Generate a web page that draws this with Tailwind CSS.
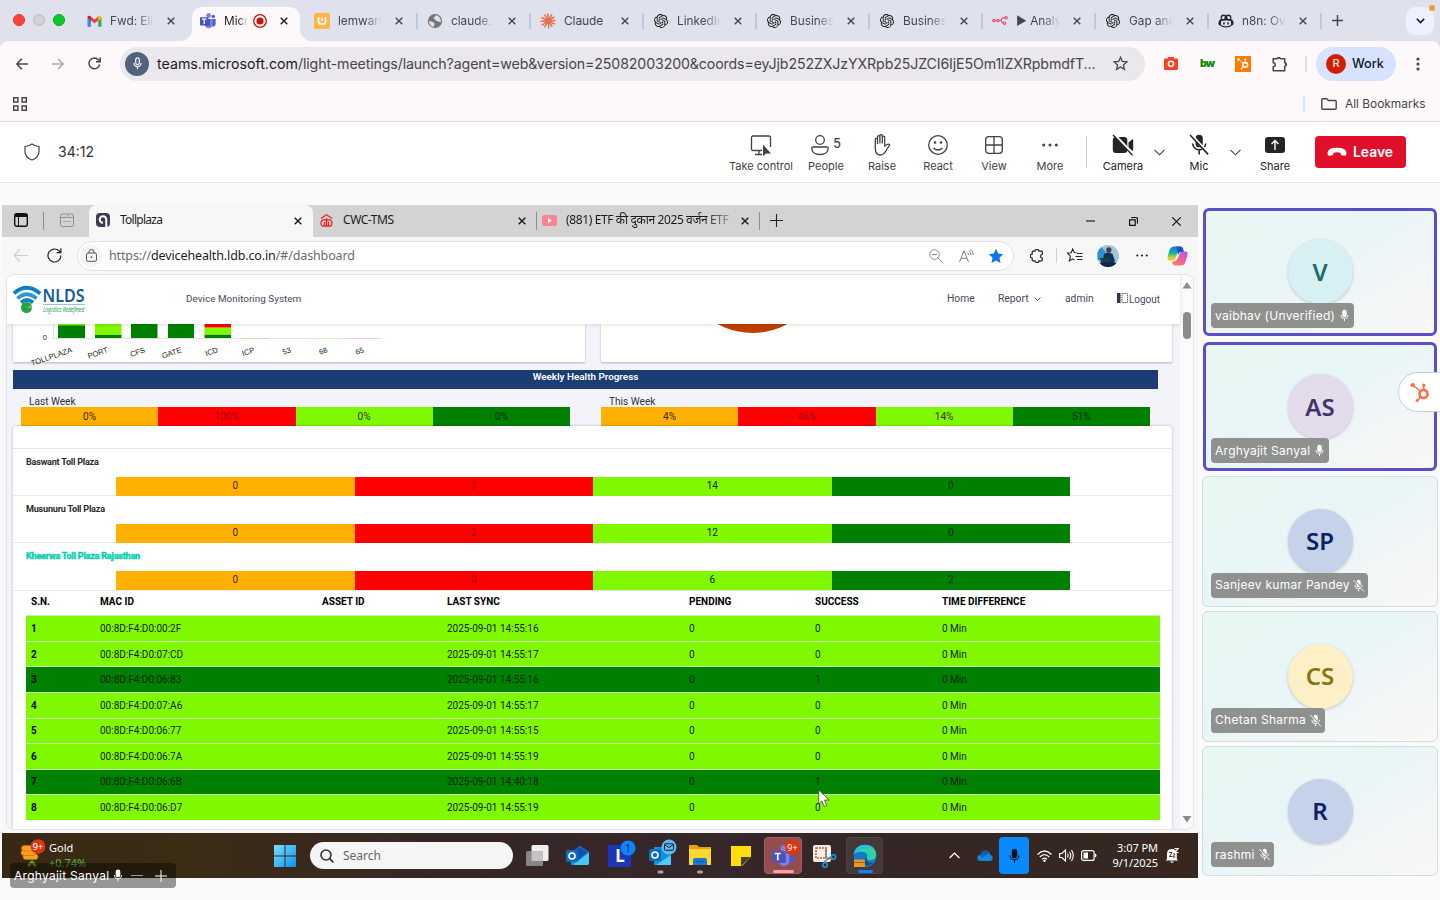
<!DOCTYPE html>
<html lang="en">
<head>
<meta charset="utf-8">
<title>Meeting</title>
<script src="https://cdn.jsdelivr.net/npm/@tailwindcss/browser@4"></script>
</head>
<body class="w-[1440px] h-[900px] overflow-hidden bg-[#fafafa] font-[Inter,'Liberation_Sans',sans-serif] relative">
<svg class="hidden">
  <symbol id="x" viewBox="0 0 8 8"><path d="M.7.7l6.6 6.6M7.3.7L.7 7.3" stroke="currentColor" stroke-width="1.4" fill="none"/></symbol>
  <symbol id="gpt" viewBox="0 0 24 24"><path fill="#16181d" d="M22.2819 9.8211a5.9847 5.9847 0 0 0-.5157-4.9108 6.0462 6.0462 0 0 0-6.5098-2.9A6.0651 6.0651 0 0 0 4.9807 4.1818a5.9847 5.9847 0 0 0-3.9977 2.9 6.0462 6.0462 0 0 0 .7427 7.0966 5.98 5.98 0 0 0 .511 4.9107 6.051 6.051 0 0 0 6.5146 2.9001A5.9847 5.9847 0 0 0 13.2599 24a6.0557 6.0557 0 0 0 5.7718-4.2058 5.9894 5.9894 0 0 0 3.9977-2.9001 6.0557 6.0557 0 0 0-.7475-7.0729zm-9.022 12.6081a4.4755 4.4755 0 0 1-2.8764-1.0408l.1419-.0804 4.7783-2.7582a.7948.7948 0 0 0 .3927-.6813v-6.7369l2.02 1.1686a.071.071 0 0 1 .038.052v5.5826a4.504 4.504 0 0 1-4.4945 4.4944zm-9.6607-4.1254a4.4708 4.4708 0 0 1-.5346-3.0137l.142.0852 4.783 2.7582a.7712.7712 0 0 0 .7806 0l5.8428-3.3685v2.3324a.0804.0804 0 0 1-.0332.0615L9.74 19.9502a4.4992 4.4992 0 0 1-6.1408-1.6464zM2.3408 7.8956a4.485 4.485 0 0 1 2.3655-1.9728V11.6a.7664.7664 0 0 0 .3879.6765l5.8144 3.3543-2.0201 1.1685a.0757.0757 0 0 1-.071 0l-4.8303-2.7865A4.504 4.504 0 0 1 2.3408 7.872zm16.5963 3.8558L13.1038 8.364 15.1192 7.2a.0757.0757 0 0 1 .071 0l4.8303 2.7913a4.4944 4.4944 0 0 1-.6765 8.1042v-5.6772a.79.79 0 0 0-.407-.667zm2.0107-3.0231l-.142-.0852-4.7735-2.7818a.7759.7759 0 0 0-.7854 0L9.409 9.2297V6.8974a.0662.0662 0 0 1 .0284-.0615l4.8303-2.7866a4.4992 4.4992 0 0 1 6.6802 4.66zM8.3065 12.863l-2.02-1.1638a.0804.0804 0 0 1-.038-.0567V6.0742a4.4992 4.4992 0 0 1 7.3757-3.4537l-.142.0805L8.704 5.459a.7948.7948 0 0 0-.3927.6813zm1.0976-2.3654l2.602-1.4998 2.6069 1.4998v2.9994l-2.5974 1.4997-2.6067-1.4997Z"/></symbol>
  <symbol id="gmail" viewBox="0 0 16 12"><path d="M1 .8V12H4V4.5z" fill="#4285f4"/><path d="M.6 2v9.3q0 .7.7.7H4V4.6z" fill="#4285f4"/><path d="M12 4.6V12h2.7q.7 0 .7-.7V2z" fill="#34a853"/><path d="M.6 2Q.6.2 2.2.3 2.8.3 3.2.6L8 4.3 12.8.6 12 5.5 8 8.5 4 5.5z" fill="#ea4335"/><path d="M.6 2Q.6.4 2 .3L4 1.5v4z" fill="#c5221f"/><path d="M12 1.2l1-.7q2.3-.8 2.4 1.6v1L12 5.6z" fill="#fbbc04"/></symbol>
  <symbol id="teams" viewBox="0 0 16 16"><circle cx="8.7" cy="2.5" r="2.4" fill="#7b83eb"/><circle cx="13.3" cy="3.4" r="1.7" fill="#5059c9"/><path d="M11 6h4.6v5a2.6 2.6 0 0 1-4.6 1.6z" fill="#5059c9"/><path d="M5 6h7.6v5.5a3.9 3.9 0 0 1-7.6 1z" fill="#7b83eb"/><path d="M5 6h5v7H5z" fill="#4f52b2"/><rect x="0" y="4.2" width="8.4" height="8.2" rx=".7" fill="#4b53bc"/><path d="M2 6.2h4.4M4.2 6.2V11" stroke="#fff" stroke-width="1.2"/></symbol>
  <symbol id="lem" viewBox="0 0 16 16"><rect width="16" height="16" rx="2" fill="#ffb648"/><path d="M4.5 4v4.5Q4.500 11 7 11h2q2.500 0 2.500-2.500V4M8 5v3" stroke="#fff" stroke-width="1.700" fill="none"/></symbol>
  <symbol id="globe" viewBox="0 0 16 16"><circle cx="8" cy="8" r="7.100" fill="#757575"/><path d="M2 8.200c2.500-.2 3 .6 4.500 1.200.6.400 1.800 1 .8 2.300L6.600 14Q2.500 13 2 8.200zM8.700 2.200c-1 1.800-1 2-2.200 2-.6 1 1.500 1.600 1 2.300 1.600.2 1.500 1.700 3 1.700 1.400.2 1.500 1 3.500.8Q14 3.200 8.700 2.200z" fill="#dfe1ec"/></symbol>
  <symbol id="claude" viewBox="0 0 16 16"><path d="M8 8V.6M8 8L11.900 1.500M8 8l6.300-4M8 8l7.500-.5M8 8l6.800 3M8 8l4.300 5.800M8 8l.8 7.400M8 8l-3.500 6.400M8 8l-6.200 4.300M8 8L.5 8.200M8 8L1.400 4.300M8 8L4.600 1.500" stroke="#e2714a" stroke-width="1.500"/></symbol>
  <symbol id="n8n" viewBox="0 0 16 9"><g fill="none" stroke="#ea4b71" stroke-width="1.200"><circle cx="1.800" cy="4.500" r="1.200"/><circle cx="6" cy="4.500" r="1.200"/><circle cx="14" cy="1.800" r="1.200"/><circle cx="12.500" cy="7.200" r="1.200"/><path d="M3 4.500h1.800M7.200 4.500h1q1.400 0 1.400-1.300T11 1.800h1.800M8.500 4.500q1.200 0 1.300 1.300T11.300 7.200"/></g></symbol>
  <symbol id="copi" viewBox="0 0 16 14"><path d="M3.300 1.200Q5 0 7 .8 8 1.300 8 1.300T9 .8Q11 0 12.700 1.200 13.800 2.400 13.200 5q1.800 1 2.300 3 .4 2-.3 2.800Q12 13.600 8 13.600T.8 10.800Q.1 10 .5 8 1 6 2.800 5 2.200 2.400 3.300 1.200z" fill="#24292f"/><path d="M4.200 2.500Q5.500 1.600 6.700 2.300 7 4.600 5.800 5 4 5.200 3.900 4.500zM11.800 2.500Q10.500 1.600 9.300 2.300 9 4.600 10.200 5q1.800.2 1.900-.5zM3 7.300Q4 6.800 8 6.600q4 .2 5 .7v3.800Q10.500 12.300 8 12.300T3 11.100z" fill="#dfe1ec"/><rect x="5.200" y="8" width="1.500" height="2.800" rx=".7" fill="#24292f"/><rect x="9.300" y="8" width="1.500" height="2.800" rx=".7" fill="#24292f"/></symbol>
  <symbol id="hub" viewBox="0 0 20 20"><g fill="none" stroke="currentColor"><circle cx="13.600" cy="11.400" r="4" stroke-width="2.600"/><path d="M2.500 2.500l8 6.200M13.800 3v4M10.500 14.500L7.500 18" stroke-width="1.500"/></g><g fill="currentColor"><circle cx="2.700" cy="2.600" r="2.200"/><circle cx="13.800" cy="2.600" r="1.700"/><circle cx="7.200" cy="18" r="1.600"/></g></symbol>
  <symbol id="mic" viewBox="0 0 10 14"><rect x="2.500" y=".5" width="5" height="8.500" rx="2.500" fill="currentColor"/><path d="M1 6.500a4 4 0 0 0 8 0M5 10.700v2.600" fill="none" stroke="currentColor"/></symbol>
  <symbol id="micoff" viewBox="0 0 14 14"><rect x="4.800" y=".8" width="4.600" height="8" rx="2.300" fill="currentColor"/><path d="M3 6.300a4.100 4.100 0 0 0 8.200 0M7.100 10.500v2.800" fill="none" stroke="currentColor"/><path d="M1.800.6l11.500 12.600" stroke="var(--cut,#8f918f)" stroke-width="1.800"/><path d="M1.300 1l11.500 12.300" stroke="currentColor" stroke-width="1"/></symbol>
</svg>

<!-- browser tab strip -->
<header class="h-[41px] bg-[#dfe1ec] flex items-center relative">
  <div class="flex gap-2 pl-[13px] w-[78px] shrink-0 -mt-px">
    <i class="size-3 rounded-full bg-[#ff453a] border border-[#e0352b]"></i>
    <i class="size-3 rounded-full bg-[#d1d1d4] border border-[#bcbcc0]"></i>
    <i class="size-3 rounded-full bg-[#0acb2b] border border-[#06a71f]"></i>
  </div>
  <div id="tabs" class="flex h-[41px]"></div>
  <svg class="size-[11px] ml-[11px] -mt-px" viewBox="0 0 11 11"><path d="M5.500 0v11M0 5.500h11" stroke="#45474f" stroke-width="1.500"/></svg>
  <div class="ml-[63px] w-7 h-7 rounded-[9px] bg-[#eef0ff] grid place-items-center"><svg class="w-[9px] h-[6px]" viewBox="0 0 9 6"><path d="M.8.8l3.700 3.700L8.200.8" fill="none" stroke="#1b1b1f" stroke-width="1.600"/></svg></div>
  <i class="absolute left-[1429px] top-[5px] size-[6px] rounded-full bg-[#f89a2b]"></i>
</header>

<!-- address bar -->
<div class="bg-[#dfe1ec]">
<div class="h-[45px] bg-[#fdf8fa] flex items-center rounded-t-lg text-[#45464b]">
  <div class="w-[36px] ml-1 grid place-items-center"><svg class="w-3 h-3" viewBox="0 0 12 12"><path d="M12 6H1M6 .7L.9 6 6 11.300" fill="none" stroke="currentColor" stroke-width="1.500"/></svg></div>
  <div class="w-[36px] grid place-items-center text-[#adabb0]"><svg class="w-3 h-3" viewBox="0 0 12 12"><path d="M0 6h11M6 .7L11.100 6 6 11.300" fill="none" stroke="currentColor" stroke-width="1.500"/></svg></div>
  <div class="w-[36px] grid place-items-center"><svg class="w-[13px] h-[13px]" viewBox="0 0 13 13"><path d="M11.700 7.500A5.400 5.400 0 1 1 10.500 2.800L12 4.300M12.200.5v4.200H8" fill="none" stroke="currentColor" stroke-width="1.500"/></svg></div>
  <div class="ml-2 w-[1025px] h-[34px] rounded-full bg-[#ebe8ed] flex items-center pl-[5px]">
    <div class="size-6 rounded-full bg-[#52617c] text-white grid place-items-center shrink-0"><svg class="w-[9px] h-[13px]" viewBox="0 0 10 14"><rect x="3" y=".8" width="4" height="7.500" rx="2" fill="none" stroke="currentColor" stroke-width="1.300"/><path d="M1 6.500a4 4 0 0 0 8 0M5 10.700v2.800" fill="none" stroke="currentColor" stroke-width="1.300"/></svg></div>
    <p class="ml-[8px] w-[956px] shrink-0 text-[14.2px] leading-5 whitespace-nowrap text-[#47464b] tracking-[-0.125px]"><span class="text-[#1c1b1f] tracking-[0px]">teams.microsoft.com</span>/light-meetings/launch?agent=web&amp;version=25082003200&amp;coords=eyJjb252ZXJzYXRpb25JZCI6IjE5Om1lZXRpbmdfT...</p>
    <svg class="w-[15px] h-[15px] shrink-0" viewBox="0 0 15 15"><path d="M7.500 1.300l1.800 4.200 4.600.4-3.500 3 1 4.500-3.900-2.400-3.900 2.400 1-4.500-3.500-3 4.600-.4z" fill="none" stroke="currentColor" stroke-width="1.300"/></svg>
  </div>
  <div class="ml-2 w-[36px] grid place-items-center"><svg class="w-[14px] h-[13px]" viewBox="0 0 14 13"><path d="M4.500 0h5l1 1.500H13q1 0 1 1V12q0 1-1 1H1q-1 0-1-1V2.500q0-1 1-1h2.500z" fill="#fb3f26"/><circle cx="7" cy="6.800" r="2.600" fill="none" stroke="#fff" stroke-width="1.500"/></svg></div>
  <div class="w-[36px] text-center text-[10.500px] font-black text-[#068a06] tracking-[-1px] leading-4">bw</div>
  <div class="w-[36px] grid place-items-center"><div class="size-4 bg-[#ff7a00] text-white grid place-items-center"><svg class="size-[12px]"><use href="#hub"/></svg></div></div>
  <div class="w-[36px] grid place-items-center"><svg class="w-[17px] h-4" viewBox="0 0 17 16"><path d="M2.200 2.800h3.900a1.800 1.400 0 0 1 3.400 0h4.200v4a1.600 1.600 0 0 1 0 3.400v4.500H2.200v-4a2 2 0 0 0 0-4z" fill="none" stroke="currentColor" stroke-width="1.500" stroke-linejoin="round"/><path d="M6.300 2.500a1.500 1.500 0 0 1 3 0zM14 7a1.500 1.500 0 0 1 0 3z" fill="currentColor"/></svg></div>
  <i class="ml-2 w-[2px] h-4 bg-[#d3e1fb]"></i>
  <div class="ml-[9px] w-[80px] h-[34px] rounded-full bg-[#d6e2ff] flex items-center pl-[10px] text-[12.700px] text-[#10192e] font-medium"><span class="size-5 rounded-full bg-[#d01f04] text-[#fbe3df] text-[11px] grid place-items-center mr-[6px]">R</span>Work</div>
  <svg class="ml-[20px] w-1 h-[14px]" viewBox="0 0 4 14" fill="currentColor"><circle cx="2" cy="2" r="1.600"/><circle cx="2" cy="7" r="1.600"/><circle cx="2" cy="12" r="1.600"/></svg>
</div>
</div>
<div class="h-[36px] bg-[#fdf8fa] border-b border-[#e6dfe2] flex items-center text-[#45464b]">
  <svg class="ml-[13px] w-[14px] h-[14px]" viewBox="0 0 14 14"><path d="M.7.700h4.200v4.200H.700zM9.100.700h4.200v4.200H9.100zM.700 9.100h4.200v4.200H.700zM9.100 9.100h4.200v4.200H9.100z" fill="none" stroke="currentColor" stroke-width="1.500"/></svg>
  <i class="ml-[1276px] w-[2px] h-4 bg-[#d3e1fb]"></i>
  <svg class="ml-4 w-4 h-3" viewBox="0 0 16 12"><path d="M.8 1.800q0-1 1-1h4l1.600 1.700h6.800q1 0 1 1v6.700q0 1-1 1H1.800q-1 0-1-1z" fill="none" stroke="currentColor" stroke-width="1.400"/></svg>
  <span class="ml-2 text-[11.900px] whitespace-nowrap">All Bookmarks</span>
</div>

<!-- meeting controls -->
<div class="h-[61px] bg-white border-b border-[#e8e8e8] flex items-center text-[#424242] text-[11px]">
  <svg class="ml-6 w-4 h-[18px]" viewBox="0 0 16 18"><path d="M8 1Q11 3.200 15 3.500v5Q15 14.500 8 17 1 14.500 1 8.500v-5Q5 3.200 8 1z" fill="none" stroke="currentColor" stroke-width="1.200"/></svg>
  <span class="ml-[18px] text-[14px] w-[40px] text-[#333] -mt-px">34:12</span>
  <div class="ml-[626px] flex">
    <div class="w-[74px] h-[44px] pt-[3px] flex flex-col items-center justify-between"><svg class="w-[22px] h-6" viewBox="0 0 22 24"><path d="M12 17.500H3q-1.500 0-1.500-1.500V4.500Q1.500 3 3 3h16q1.500 0 1.500 1.500V14M5 21.500h7M9 17.500v4" fill="none" stroke="currentColor" stroke-width="1.300"/><path d="M13 11.500v11.700l3-2.700h5z" fill="currentColor"/></svg><span class="whitespace-nowrap leading-4">Take control</span></div>
    <div class="w-[56px] h-[44px] pt-[3px] flex flex-col items-center justify-between"><div class="flex h-6 items-center"><svg class="w-[20px] h-6" viewBox="0 0 20 24"><circle cx="9" cy="7" r="4.300" fill="none" stroke="currentColor" stroke-width="1.300"/><path d="M2 14h14q1.200 0 1.200 1.200Q17 21.500 9 21.500T.8 15.200Q.8 14 2 14z" fill="none" stroke="currentColor" stroke-width="1.300"/></svg><span class="text-[12.500px] font-medium ml-[2px] -mt-[2px]">5</span></div><span class="leading-4">People</span></div>
    <div class="w-[56px] h-[44px] pt-[3px] flex flex-col items-center justify-between"><svg class="w-[20px] h-6" viewBox="0 0 20 24"><path d="M3.300 13V6.500q0-1.200 1.100-1.200t1.100 1.200V11 4q0-1.300 1.200-1.300T7.900 4v6.500V3q0-1.300 1.200-1.300T10.300 3v7.500V4.500q0-1.300 1.200-1.300t1.200 1.300v8.500l3-1.700q1.300-.5 2 .7l-4.200 6.500Q11.500 22 8.500 22q-5.200 0-5.200-6.500z" fill="none" stroke="currentColor" stroke-width="1.300"/></svg><span class="leading-4">Raise</span></div>
    <div class="w-[56px] h-[44px] pt-[3px] flex flex-col items-center justify-between"><svg class="w-[22px] h-6" viewBox="0 0 22 24"><circle cx="11" cy="12" r="9.300" fill="none" stroke="currentColor" stroke-width="1.300"/><circle cx="8" cy="9.500" r="1.300" fill="currentColor"/><circle cx="14" cy="9.500" r="1.300" fill="currentColor"/><path d="M6.500 15q4.500 4 9 0" fill="none" stroke="currentColor" stroke-width="1.300"/></svg><span class="leading-4">React</span></div>
    <div class="w-[56px] h-[44px] pt-[3px] flex flex-col items-center justify-between"><svg class="w-[18px] h-6" viewBox="0 0 18 24"><rect x=".7" y="3.700" width="16.600" height="16.600" rx="3" fill="none" stroke="currentColor" stroke-width="1.300"/><path d="M9 4v16M1 12h16" stroke="currentColor" stroke-width="1.300"/></svg><span class="leading-4">View</span></div>
    <div class="w-[56px] h-[44px] pt-[3px] flex flex-col items-center justify-between"><svg class="w-[16px] h-6" viewBox="0 0 16 24" fill="currentColor"><circle cx="1.700" cy="12" r="1.500"/><circle cx="8" cy="12" r="1.500"/><circle cx="14.300" cy="12" r="1.500"/></svg><span class="leading-4">More</span></div>
  </div>
  <i class="ml-[8px] w-px h-8 bg-[#d1d1d1]"></i>
  <div class="ml-[8px] flex items-center text-[#242424]">
    <div class="w-[56px] h-[44px] pt-[3px] flex flex-col items-center justify-between"><svg class="w-[22px] h-6" viewBox="0 0 22 24"><rect x=".800" y="4" width="14.500" height="16" rx="3" fill="currentColor"/><path d="M16.500 9.500L20 6.500q1.200-.6 1.200.6v9.800q0 1.200-1.200.6l-3.500-3z" fill="currentColor"/><path d="M2.500 1.500l19 20" stroke="#fff" stroke-width="2.500"/><path d="M1 2l19.500 20.300" stroke="currentColor" stroke-width="1.300"/></svg><span class="leading-4">Camera</span></div>
    <div class="w-[16px] grid place-items-center"><svg class="w-[11px] h-[7px]" viewBox="0 0 11 7"><path d="M.5.800l5 5 5-5" fill="none" stroke="#424242" stroke-width="1.100"/></svg></div>
    <div class="w-[56px] ml-1 h-[44px] pt-[3px] flex flex-col items-center justify-between"><svg class="w-[22px] h-[23px] [--cut:#fff]"><use href="#micoff"/></svg><span class="leading-4">Mic</span></div>
    <div class="w-[16px] grid place-items-center"><svg class="w-[11px] h-[7px]" viewBox="0 0 11 7"><path d="M.5.800l5 5 5-5" fill="none" stroke="#424242" stroke-width="1.100"/></svg></div>
    <div class="w-[56px] ml-1 h-[44px] pt-[3px] flex flex-col items-center justify-between"><svg class="w-[20px] h-6" viewBox="0 0 20 24"><rect x="0" y="4" width="20" height="16" rx="3" fill="currentColor"/><path d="M10 17V7.500M6.500 11L10 7.500l3.500 3.500" fill="none" stroke="#fff" stroke-width="1.400"/></svg><span class="leading-4">Share</span></div>
  </div>
  <div class="ml-[12px] w-[91px] h-8 rounded-[4px] bg-[#e0102a] text-white flex items-center pl-3 text-[13.900px] font-semibold"><svg class="w-5 h-[10px] mr-[6px]" viewBox="0 0 20 10"><path d="M10 .8Q19.800.800 19.500 6.500 19.300 9 17.500 8.700L14.500 8.200Q13.500 8 13.400 5.800 10 4.500 6.600 5.800 6.500 8 5.500 8.200L2.500 8.700Q.7 9 .5 6.500.200.800 10 .8z" fill="#fff"/></svg>Leave</div>
</div>

<!-- stage -->
<main class="flex pt-[22px] pl-[2px] h-[717px]">
  <section class="w-[1196px] h-[673px] bg-[#f7f7f7] overflow-hidden shrink-0 font-['Noto_Sans',sans-serif]">
    <!-- shared window tabs -->
    <div class="h-[32px] bg-[#d3d3d3] flex items-center text-[12px] text-[#1b1b1b]">
      <svg class="ml-3 w-[14px] h-[14px] -mt-[2px]" viewBox="0 0 14 14"><rect x=".7" y=".7" width="12.600" height="12.600" rx="2" fill="none" stroke="#111" stroke-width="1.400"/><path d="M1 1h12v3H1z" fill="#111"/><path d="M4.500 4v9" stroke="#111"/></svg>
      <i class="ml-[15px] w-px h-[18px] bg-[#8d8d8d]"></i>
      <svg class="ml-4 w-[14px] h-[14px] -mt-[2px]" viewBox="0 0 14 14" fill="none" stroke="#8e8e8e"><rect x=".5" y="1" width="13" height="12.500" rx="2"/><path d="M.5 4.500h6L8 1.500M8 4.500h5.500M3.500 8.500h1.600M6.300 8.500h1.600M9.100 8.500h1.600"/></svg>
      <div class="ml-[15px] w-[224px] h-[32px] rounded-t-lg bg-[#f7f7f7] flex items-center pl-[7px] pb-[2px]">
        <svg class="w-[14px] h-[14px]" viewBox="0 0 14 14"><rect width="14" height="14" rx="4" fill="#3b3b56"/><path d="M10.300 14V6.500a3.300 3.300 0 1 0-3.300 3.300" fill="none" stroke="#fff" stroke-width="2"/></svg>
        <span class="ml-[10px] w-[170px] tracking-[-0.73px] [word-spacing:0] tracking-[-0.75px]">Tollplaza</span>
        <svg class="size-2 ml-[4px] mt-[2px]"><use href="#x"/></svg>
      </div>
      <svg class="ml-[7px] w-[13px] h-[13px] -mt-px" viewBox="0 0 13 13" fill="none" stroke="#f3232a" stroke-width="1.300"><path d="M.800 4.500L6.500.800l5.700 3.700M2 12q-2-3 0-5.500 2.500-2 4.500.5 2-2.500 4.500-.500 2 2.500 0 5.500H8.500V7.500M2 12h2.500V8M4.500 12h4M6.500 4v8"/></svg>
      <span class="ml-[10px] w-[170px] tracking-[-0.45px] -mt-[2px]">CWC-TMS</span>
      <svg class="size-2 ml-[5px]"><use href="#x"/></svg>
      <i class="ml-[10px] w-px h-[18px] bg-[#8d8d8d]"></i>
      <svg class="ml-[5px] w-[15px] h-[11px] -mt-[2px]" viewBox="0 0 15 11"><rect width="15" height="11" rx="2.500" fill="#f98593"/><path d="M6 3v5l4-2.500z" fill="#fff"/></svg>
      <span class="ml-[9px] w-[163px] whitespace-nowrap tracking-[-0.38px] leading-6 -mt-[2px] [mask-image:linear-gradient(to_right,#000_85%,#0005)]">(881) ETF की दुकान 2025 वर्जन ETF</span>
      <svg class="size-2 ml-[12px]"><use href="#x"/></svg>
      <i class="ml-[10px] w-px h-[18px] bg-[#8d8d8d]"></i>
      <svg class="size-[13px] ml-[10px] -mt-[2px]" viewBox="0 0 13 13"><path d="M6.500 0v13M0 6.500h13" stroke="#222" stroke-width="1.100"/></svg>
      <svg class="w-[9px] h-[2px] ml-[303px]" viewBox="0 0 9 2"><path d="M0 1h9" stroke="#111" stroke-width="1.100"/></svg>
      <svg class="size-[9px] ml-[34px]" viewBox="0 0 9 9"><path d="M.6 2.800h5.600v5.600H.6zM2.500 1Q3 .5 3.800.5h2.700Q8.500.5 8.500 2.500v2.700q0 .8-.5 1.300" fill="none" stroke="#111" stroke-width="1.200"/></svg>
      <svg class="size-[9px] ml-[34px]" viewBox="0 0 9 9"><path d="M.3.300l8.400 8.400M8.700.300L.3 8.700" stroke="#111" stroke-width="1.200"/></svg>
    </div>
    <!-- shared window address bar -->
    <div class="h-[37px] bg-[#f7f7f7] flex items-center text-[#333]">
      <svg class="ml-[11px] w-[15px] h-[13px]" viewBox="0 0 15 13"><path d="M15 6.500H1M7 .5l-6 6 6 6" fill="none" stroke="#ccc" stroke-width="1.100"/></svg>
      <svg class="ml-[19px] w-[15px] h-[15px]" viewBox="0 0 15 15"><path d="M14 7.500A6.500 6.500 0 1 1 12 2.800L13.700 4.500M13.900.3v4.400H9.600" fill="none" stroke="#222" stroke-width="1.200"/></svg>
      <div class="ml-[15px] w-[937px] h-[30px] rounded-full bg-white border border-[#e1e1e1] flex items-center pl-[2px]">
        <span class="size-[22px] rounded-full bg-[#f4f4f4] grid place-items-center"><svg class="w-[11px] h-[13px]" viewBox="0 0 11 13"><rect x=".5" y="4" width="10" height="8.300" rx="1.500" fill="none" stroke="#555"/><path d="M3 4V2.800Q3 .6 5.500.6T8 2.800V4" fill="none" stroke="#555"/><circle cx="5.500" cy="8.200" r=".9" fill="#555"/></svg></span>
        <span class="ml-[7px] mt-px w-[800px] text-[12.5px] text-[#6a6a6a] tracking-[-0.13px] whitespace-nowrap">https://<span class="text-[#1b1b1b]">devicehealth.ldb.co.in</span>/#/dashboard</span>
        <svg class="ml-[20px] size-[14px]" viewBox="0 0 14 14" fill="none" stroke="#8a8a8a"><circle cx="5.500" cy="5.500" r="4.800"/><path d="M9 9l4.500 4.500M3 5.500h5"/></svg>
        <svg class="ml-[16px] w-[15px] h-[14px]" viewBox="0 0 15 14" fill="none" stroke="#7d7d7d"><path d="M.5 13L5 1.800 9.500 13M2 9.300h6M8.500 3.500q1 1 .9 2.500M10 1.700q2.300 1.800 2 4.500M11.500.500q3 2.200 2.700 5.500" /></svg>
        <svg class="ml-[14px] size-[16px]" viewBox="0 0 16 16"><path d="M8 .8l2.200 4.700 5 .7-3.700 3.500 1 5.200L8 12.400l-4.500 2.500 1-5.200L.8 6.200l5-.7z" fill="#0b79e8"/></svg>
      </div>
      <svg class="ml-[16px] size-[14px]" viewBox="0 0 14 14"><path d="M3 2.200h2a2 1.800 0 0 1 4 0h2.500q.8 0 .8.800V5.500a1.700 1.700 0 0 0 0 3.600V11q0 .8-.8.8H9a2 1.800 0 0 1-4 0H3q-.8 0-.8-.8V9a1.800 1.800 0 0 1 0-3.800V3q0-.8.8-.8z" fill="none" stroke="#222" stroke-width="1.200"/></svg>
      <i class="ml-[12px] w-px h-[15px] bg-[#d0d0d0]"></i>
      <svg class="ml-[10px] w-[16px] h-[15px]" viewBox="0 0 16 15"><path d="M9.500 4.800L7.300 4.600 5.700.9 4.200 4.700.6 5l2.800 3.200-1 4.700 3.300-2 1.800 1.100M10 5.500h5.500M8.500 8.500h7M10 11.500h5.500" fill="none" stroke="#222" stroke-width="1.100"/></svg>
      <svg class="ml-[14px] size-[22px]" viewBox="0 0 22 22"><circle cx="11" cy="11" r="11" fill="#9fc4de"/><path d="M.5 8a11 11 0 0 1 4-6L8 6v9H.800z" fill="#2793d6"/><path d="M7 9q4-3.500 8.500 0L18 16l-3 4.500H5z" fill="#14335c"/><circle cx="11.800" cy="5" r="2.700" fill="#5a3a35"/><path d="M3 13h10l-2 5-7 .5z" fill="#233b4c"/><path d="M2.500 18a11 11 0 0 0 17 0l-5-1z" fill="#0b2745"/></svg>
      <svg class="ml-[17px] w-[12px] h-[3px]" viewBox="0 0 12 3" fill="#222"><circle cx="1.300" cy="1.500" r="1.100"/><circle cx="6" cy="1.500" r="1.100"/><circle cx="10.700" cy="1.500" r="1.100"/></svg>
      <svg class="ml-[19px] w-[21px] h-5" viewBox="0 0 21 20"><defs><linearGradient id="c1" x1="0" y1="0" x2="0" y2="1"><stop offset="0" stop-color="#167bdc"/><stop offset=".45" stop-color="#12b0a0"/><stop offset=".8" stop-color="#c5d93d"/><stop offset="1" stop-color="#fbc21d"/></linearGradient><linearGradient id="c2" x1="1" y1="0" x2="0" y2="1"><stop offset="0" stop-color="#a45cf0"/><stop offset=".5" stop-color="#f0609e"/><stop offset="1" stop-color="#fb8a3c"/></linearGradient></defs><path d="M7 .5h6.500Q12 1 11 5L9 11.500Q8 14.500 5 14.500H2.500Q-.5 14.500.8 9.500L3 3Q4 .5 7 .5z" fill="url(#c1)"/><path d="M9.500 .5h4q2 0 2.500 2l1 3.500h-3Q12 6 11 9z" fill="#1f4fcf"/><path d="M14 19.500H7.500q-2-.5-2.500-4 4.500.500 5.500-3L12.500 8Q13.500 5.500 16.500 5.500h2q3 0 1.700 5L18 17q-1 2.500-4 2.500z" fill="url(#c2)"/></svg>
    </div>
    <!-- dashboard page -->
    <div class="mx-1 h-[556px] flex rounded-[8px] overflow-hidden border border-[#e3e4e8] bg-[#fbfbfc] font-[Roboto,sans-serif]">
      <div class="w-[1173px] bg-[#f3f4fa] shrink-0">
        <div class="h-[49px] bg-white flex items-center text-[10.3px] text-[#474a5e] shadow-[0_1px_4px_#0002] relative pb-px">
          <svg class="ml-[6px] w-[76px] h-[34px] mt-[5px]" viewBox="0 0 76 34"><g fill="none" stroke-width="3.700"><path d="M.8 8.500Q13.500-3 27.200 8.500" stroke="#0a7fc6"/><path d="M4.500 13.500Q13.500 5 23.500 13.500" stroke="#2a98d5"/><path d="M8 17.500q6-5 12 0" stroke="#1582c4"/></g><circle cx="13.500" cy="22.500" r="5.500" fill="#1fa649"/><path d="M14 22.500l4.500-3a5 5 0 0 1 .5 4z" fill="#8cb56a"/><text x="29.500" y="16.800" font-family="'Noto Sans'" font-size="18.500" font-weight="600" fill="#16599c" textLength="42" lengthAdjust="spacingAndGlyphs">NLDS</text><path d="M30 19.500h42" stroke="#87aed0" stroke-width="1.200" stroke-dasharray="1.500 .4"/><text x="30" y="27" font-family="'Noto Sans'" font-style="italic" font-size="7.200" fill="#199a54" textLength="41" lengthAdjust="spacingAndGlyphs">Logistics Redefined</text></svg>
          <span class="ml-[97px] w-[761px] text-[9.950px]">Device Monitoring System</span>
          <span class="w-[51px]">Home</span><span class="w-[36px]">Report</span>
          <svg class="w-[7px] h-[4px] mr-[24px]" viewBox="0 0 7 4"><path d="M.5.500l3 3 3-3" fill="none" stroke="currentColor" stroke-width=".9"/></svg>
          <span class="w-[52px]">admin</span>
          <svg class="w-[11px] h-[10px] mr-[1px] -mt-[2px]" viewBox="0 0 11 10"><path d="M0 0h3.500v10H0z" fill="#33364a"/><path d="M5 .5h5.500v9H5z" fill="none" stroke="#33364a" stroke-width=".8" stroke-dasharray="1.500 .7"/></svg>
          <span class="tracking-[-0.05px] text-[10px]">Logout</span>
        </div>
        <div class="flex pl-[6px] gap-4">
          <svg class="w-[572px] h-[38px] bg-white shadow-[0_1px_2px_#0004] shrink-0 overflow-visible" viewBox="13 324 572 38">
            <path d="M53 338.500h329M53.500 324v14" stroke="#e2e2e4" fill="none"/>
            <g fill="#008000"><path d="M58 325h27v13H58zM95 335h26.500v3H95zM131 324h26.500v14H131zM168 324h26v14h-26zM204.500 334.500H231v3.500h-26.500z"/></g>
            <g fill="#80f900"><path d="M58 324h27v1.500H58zM95 324h26.500v11H95zM204.500 327.500H231v7h-26.500z"/></g>
            <path d="M204.500 324H231v3.500h-26.500z" fill="#fe0000"/>
            <path d="M241 338.500h26" stroke="#cfd9b5"/><path d="M314 338.500h26" stroke="#d5f3c0"/><path d="M350 338.500h26" stroke="#f3cdcd"/>
            <g font-size="7.600" fill="#222" text-anchor="end" font-family="Liberation Sans"><text x="47" y="340">0</text>
            <text transform="translate(72.500 352) rotate(-19)">TOLLPLAZA</text><text transform="translate(108.500 352) rotate(-19)">PORT</text><text transform="translate(145.500 352) rotate(-19)">CFS</text><text transform="translate(182 352) rotate(-19)">GATE</text><text transform="translate(218.500 352) rotate(-19)">ICD</text><text transform="translate(255 352) rotate(-19)">ICP</text><text transform="translate(291.500 352) rotate(-19)">53</text><text transform="translate(328 352) rotate(-19)">68</text><text transform="translate(364.500 352) rotate(-19)">65</text></g>
          </svg>
          <svg class="w-[571px] h-[38px] bg-white shadow-[0_1px_2px_#0004] shrink-0" viewBox="601 324 571 38"><circle cx="752.500" cy="260.500" r="72.500" fill="#bf3f00"/></svg>
        </div>
        <div class="ml-[6px] mt-[8px] w-[1145px] h-[19px] bg-[#1c3c74] text-white text-[9.9px] font-semibold text-center leading-[14px]">Weekly Health Progress</div>
        <div class="flex pl-[14px] gap-[31px] text-[10.1px] text-[#333] pt-[6px]">
          <div class="w-[549px]"><p class="pl-[8px] h-[12px] leading-[13px]">Last Week</p><div class="grid grid-cols-4 h-[19px] text-center leading-[20px]"><span class="bg-[#ffb000] text-[#3a2a00]">0%</span><span class="bg-[#fe0000] text-[#a00]">100%</span><span class="bg-[#80f900]">0%</span><span class="bg-[#008000] text-[#042c04]">0%</span></div></div>
          <div class="w-[549px]"><p class="pl-[8px] h-[12px] leading-[13px]">This Week</p><div class="grid grid-cols-4 h-[19px] text-center leading-[20px]"><span class="bg-[#ffb000] text-[#3a2a00]">4%</span><span class="bg-[#fe0000] text-[#a00]">46%</span><span class="bg-[#80f900]">14%</span><span class="bg-[#008000] text-[#042c04]">51%</span></div></div>
        </div>
        <div class="ml-[6px] w-[1159px] h-[403px] bg-white rounded-t shadow-[0_0_3px_#0004] relative">
          <div class="h-[23px] border-b border-[#e4e4e6]"></div>
          <div id="plazas"></div>
          <div id="rows" class="ml-[13px] w-[1134px] text-[10px] text-[#10240a]"></div>
        </div>
      </div>
      <div class="flex flex-col items-center w-[14px] h-full">
        <svg class="mt-[7px] w-[10px] h-[7px]" viewBox="0 0 10 7"><path d="M5 0l4.500 6.500h-9z" fill="#8b8b8b"/></svg>
        <i class="mt-[23px] w-[8px] h-[27px] rounded-full bg-[#8b8b8b]"></i>
        <svg class="mt-auto mb-[6px] w-[10px] h-[7px]" viewBox="0 0 10 7"><path d="M5 6.500L.5 0h9z" fill="#8b8b8b"/></svg>
      </div>
    </div>
    <!-- taskbar -->
    <div class="mt-[3px] h-[45px] bg-[linear-gradient(90deg,#372914_0%,#3b2c14_15%,#372626_36%,#35272a_60%,#37271f_100%)] flex items-center text-white">
      <svg class="ml-[17px] w-[26px] h-[28px] -mt-[5px]" viewBox="0 0 26 28"><g fill="#f8a01b" stroke="#c26d07" stroke-width=".6"><rect x="4" y="15" width="15" height="5.500" rx="2.700"/><rect x="2" y="11" width="15" height="5.500" rx="2.700"/><rect x="2.500" y="6.500" width="15" height="5.500" rx="2.700"/></g><path d="M9 27l4-4 4 4" stroke="#5ca510" stroke-width="3" fill="none"/><circle cx="19" cy="7.500" r="7.300" fill="#e0340c"/><text x="19" y="10.800" font-size="9" text-anchor="middle" fill="#fff" font-family="Noto Sans" font-weight="500">9+</text></svg>
      <div class="ml-[4px] w-[224px] text-[11px] leading-[15px] -mt-[2px]"><p>Gold</p><p class="text-[#5dbb4d]">+0.74%</p></div>
      <svg class="ml-[1px] w-[22px] h-[22px]" viewBox="0 0 22 22"><defs><linearGradient id="w" x1="0" y1="0" x2="1" y2="1"><stop offset="0" stop-color="#7fdcff"/><stop offset="1" stop-color="#0a93f0"/></linearGradient></defs><path d="M0 0h10.500v10.500H0zM11.500 0H22v10.500H11.500zM0 11.500h10.500V22H0zM11.500 11.500H22V22H11.500z" fill="url(#w)"/></svg>
      <div class="ml-[14px] w-[203px] h-[27px] rounded-full bg-[#f6f5f5] flex items-center pl-[10px] text-[12px] text-[#666]"><svg class="size-[14px] mr-[9px]" viewBox="0 0 14 14" fill="none" stroke="#333" stroke-width="1.600"><circle cx="6" cy="6" r="5"/><path d="M9.600 9.600l3.800 3.800"/></svg>Search</div>
      <svg class="ml-[12px] w-6 h-6" viewBox="0 0 24 24"><rect x="6.500" y="1" width="17" height="16" rx="1.500" fill="#efeded"/><rect x="1" y="7" width="17" height="15" rx="1.500" fill="#8a8585"/><path d="M6.500 7H18v10H6.500z" fill="#c5c2c2"/></svg>
      <svg class="ml-[16px] w-6 h-6" viewBox="0 0 24 24"><path d="M6 9l9-7 9 6v11q0 2-2 2H6z" fill="#1a8fe3"/><path d="M9 7l6-4 8 5-11 9z" fill="#1150b0"/><path d="M10 19l14-10v10q0 2-2 2H9z" fill="#45c7fa"/><rect x="1" y="6" width="12" height="12" rx="1.500" fill="#0f6cbd"/><circle cx="7" cy="12" r="3" fill="none" stroke="#fff" stroke-width="1.600"/></svg>
      <svg class="ml-[18px] w-[29px] h-[28px] -mt-[4px]" viewBox="0 0 29 28"><path d="M1 5h23v22H1z" fill="#1c36b8"/><text x="13" y="22" font-size="17" font-weight="700" fill="#fff" text-anchor="middle" font-family="Noto Sans">L</text><circle cx="21" cy="8" r="7.500" fill="#0d84ff"/><text x="21" y="12" font-size="10.500" fill="#10203a" text-anchor="middle" font-family="Noto Sans">1</text></svg>
      <svg class="ml-[12px] w-[29px] h-[38px] mt-[5px]" viewBox="0 0 29 38"><path d="M6 8h17v18H6z" fill="#1490df"/><path d="M8 26l15-10v10z" fill="#50c8f8"/><rect x="1" y="10" width="12" height="12" rx="1.500" fill="#0f6cbd"/><circle cx="7" cy="16" r="3" fill="none" stroke="#fff" stroke-width="1.600"/><circle cx="21" cy="8" r="7.500" fill="#5cbcf0"/><rect x="16.500" y="4.800" width="9" height="6.500" rx=".8" fill="none" stroke="#123"/><path d="M16.500 5.500L21 8.500l4.500-3" fill="none" stroke="#123"/><rect x="9.500" y="31.500" width="6" height="3" rx="1.500" fill="#aaa4a4"/></svg>
      <svg class="ml-[11px] w-6 h-[38px] mt-[5px]" viewBox="0 0 24 38"><path d="M1 6h8l2 2h12v18H1z" fill="#e9a400"/><path d="M1 10h22v16H1z" fill="#ffd733"/><path d="M5 21q0-2 2-2h10q2 0 2 2v5H5z" fill="#1479d0"/><path d="M8 22.500h8" stroke="#0b4f96"/><rect x="9" y="31.500" width="6" height="3" rx="1.500" fill="#aaa4a4"/></svg>
      <svg class="ml-[19px] w-5 h-5" viewBox="0 0 20 20"><path d="M0 0h20v11l-9 9H0z" fill="#ffdd0c"/><path d="M10 11h10L10 20z" fill="#454038"/></svg>
      <div class="ml-[13px] w-[38px] h-[37px] rounded bg-[#954c4f] border border-[#a45e60] relative"><svg class="absolute left-[7px] top-[7px] size-[22px]"><use href="#teams"/></svg><span class="absolute left-[20px] top-[2px] size-[15px] rounded-full bg-[#e0340c] text-[9px] grid place-items-center">9+</span><i class="absolute left-[8px] top-[32px] w-[21px] h-[3px] rounded bg-[#f6a3a8]"></i></div>
      <svg class="ml-[11px] w-6 h-[24px]" viewBox="0 0 24 24"><rect x="0" y="1" width="18" height="17" rx="2" fill="#f3f0ef"/><path d="M3 4h10v10H3z" fill="none" stroke="#e05a20" stroke-width="1.600" stroke-dasharray="2 1"/><path d="M13 5v9l7 1M11 18l8-6" stroke="#6c7680" stroke-width="1.300" fill="none"/><circle cx="20.500" cy="13" r="2.200" fill="none" stroke="#1d9be0" stroke-width="1.500"/><circle cx="12" cy="21" r="2.200" fill="none" stroke="#1d9be0" stroke-width="1.500"/></svg>
      <div class="ml-[9px] w-[37px] h-[37px] rounded bg-[#443838] border border-[#4d4241] relative"><svg class="absolute left-[6px] top-[6px] size-6" viewBox="0 0 24 24"><circle cx="12" cy="12" r="11.300" fill="#1278c8"/><path d="M.8 10Q3 .7 12 .7 23 1 23.300 11q-.3 5-6.300 5.200-4-.2-3-3 1.500-3-2.500-5Q6 6.500.8 10z" fill="#2fd0a5"/><path d="M.7 11Q1 2 11 1q8 1 7 3-14 0-17.300 7z" fill="#2bb7ea"/><path d="M14 14q-3 5 6 5-8 6-12-2z" fill="#0b4a8f"/><rect x="1" y="15.500" width="11" height="7.500" fill="#e8992a"/><path d="M1 18.500h11" stroke="#a55f0d"/></svg><i class="absolute left-[11px] top-[32px] w-[15px] h-[3px] rounded bg-[#0d84ff]"></i></div>
      <svg class="ml-[66px] w-[11px] h-[7px]" viewBox="0 0 11 7"><path d="M.6 6l4.900-4.900L10.400 6" fill="none" stroke="#fff" stroke-width="1.300"/></svg>
      <svg class="ml-[17px] w-4 h-[11px]" viewBox="0 0 16 11"><path d="M3.500 11Q.3 11 .3 8T3.500 5Q4.500.500 8.500.500T13 5q2.700.300 2.700 3t-3 3z" fill="#1488e0"/><path d="M3.500 5Q4.500.500 8.500.500q2.500 0 3.500 2.500L5 8z" fill="#0a5fb4"/></svg>
      <div class="ml-[6px] w-[30px] h-[37px] rounded bg-[#0a8aff] text-[#081420] grid place-items-center"><svg class="w-[11px] h-[16px]"><use href="#mic"/></svg></div>
      <svg class="ml-[8px] w-[15px] h-[12px]" viewBox="0 0 15 12" fill="none" stroke="#fff" stroke-width="1.200"><path d="M.5 4.500q7-7 14 0M2.700 7q4.800-4.800 9.600 0M5 9.300q2.500-2.500 5 0"/><circle cx="7.500" cy="10.700" r=".6" fill="#fff"/></svg>
      <svg class="ml-[7px] w-[15px] h-[13px]" viewBox="0 0 15 13" fill="none" stroke="#fff" stroke-width="1.100"><path d="M.6 4.500h2.300L6.500 1v11L2.900 8.500H.6zM8.500 4.500q1.300 2 0 4M10.500 2.700q2.500 3.800 0 7.600M12.500 1q3.500 5.500 0 11"/></svg>
      <svg class="ml-[7px] w-[16px] h-[11px]" viewBox="0 0 16 11"><rect x=".6" y=".6" width="12.500" height="9.800" rx="2" fill="none" stroke="#fff" stroke-width="1.200"/><rect x="2.500" y="2.500" width="4.500" height="6" fill="#fff"/><path d="M14 3.500q1.500.3 1.500 2T14 7.500z" fill="#fff"/></svg>
      <div class="w-[61px] text-right text-[11px] leading-[15px] whitespace-nowrap tracking-[-0.05px] -mt-[2px]"><p>3:07 PM</p><p>9/1/2025</p></div>
      <svg class="ml-[7px] w-[14px] h-[15px]" viewBox="0 0 14 15"><path d="M2 11V6q0-5 5-5 4.500 0 4.800 5v5l1.200 1.500H.5zM5 13.500h4q-.5 1.300-2 1.300t-2-1.300z" fill="#fff"/><path d="M4 4.500h3L4.500 8.500H7.500M8 6h2L8 9h2.300" stroke="#37271f" fill="none" stroke-width=".9"/><path d="M9.500.500h4l-4 4h4" stroke="#fff" fill="none" stroke-width="1.200"/></svg>
    </div>
  </section>
  <aside id="people" class="ml-1 flex flex-col gap-[4px] pt-[1.500px] w-[236px]"></aside>
</main>

<!-- presenter label -->
<div class="absolute left-[10px] top-[863px] w-[166px] h-[25px] rounded bg-black/40 text-white flex items-center pl-[4px] text-[12px] whitespace-nowrap"><span class="w-[95px] tracking-[0.27px]">Arghyajit Sanyal</span><svg class="ml-1 w-[10px] h-[13px]"><use href="#mic"/></svg><i class="ml-2 w-[12px] h-px bg-[#999]"></i><svg class="ml-[12px] size-[12px]" viewBox="0 0 12 12"><path d="M6 0v12M0 6h12" stroke="#fff"/></svg></div>
<!-- side widget -->
<div class="absolute left-[1398px] top-[372px] w-[50px] h-[40px] rounded-l-full bg-white border border-[#c3cee0] flex items-center pl-[11px] text-[#ff6f43]"><svg class="w-[20px] h-[21px]"><use href="#hub"/></svg></div>
<!-- pointer -->
<svg class="absolute left-[818px] top-[789px] w-[12px] h-[19px]" viewBox="0 0 12 19"><path d="M.7 1v14l3.200-3 2.300 5.500 2.500-1L6.500 11h4.700z" fill="#fff" stroke="#444" stroke-width=".8"/></svg>

<script>
const tabs=[['gmail','Fwd: Elle'],['teams','Micr'],['lem','lemwarm'],['globe','claude.'],['claude','Claude'],['gpt','LinkedIn'],['gpt','Business'],['gpt','Business'],['n8n','▶ Analy'],['gpt','Gap ana'],['copi','n8n: Ov']];
document.getElementById('tabs').innerHTML=tabs.map(([ic,t],i)=>{
  const on=i===1;
  const w=on?'w-[24px]':'w-[44px]';
  const rec=on?'<svg class="w-[14px] h-[14px] ml-[5px] shrink-0" viewBox="0 0 14 14"><circle cx="7" cy="7" r="6.300" fill="none" stroke="#c5150c" stroke-width="1.300"/><circle cx="7" cy="7" r="3.600" fill="#c5150c"/></svg>':'';
  return `<div class="w-[113px] h-[41px] relative">${on?'<i class="absolute left-[-11px] top-[29px] w-3 h-3 overflow-hidden"><b class="absolute left-[-12px] top-[-12px] size-6 rounded-full shadow-[0_0_0_12px_#fdf8fa]"></b></i><i class="absolute left-[109px] top-[29px] w-3 h-3 overflow-hidden"><b class="absolute left-0 top-[-12px] size-6 rounded-full shadow-[0_0_0_12px_#fdf8fa]"></b></i>':''}
  <div class="${on?'ml-px w-[108px] mt-[7px] h-[34px] rounded-t-[10px] bg-[#fdf8fa] text-[#1f1f23] pl-[8px] pb-[7px]':i===0?'w-[113px] h-[41px] text-[#45474f] pl-[8px]':'w-[113px] h-[41px] text-[#45474f] pl-[10px]'} flex items-center">
  <div class="w-[16px] grid place-items-center shrink-0"><svg class="${ic==='gpt'?'size-[14px]':ic==='gmail'?'w-[15px] h-[12px]':ic==='n8n'?'w-[16px] h-[9px]':ic==='copi'?'w-[16px] h-[14px]':'size-[16px]'}"><use href="#${ic}"/></svg></div>
  <span class="ml-[8px] ${w} shrink-0 text-[11.800px] leading-4 whitespace-nowrap overflow-hidden ${t==='Claude'?'':'[mask-image:linear-gradient(to_right,#000_60%,transparent)]'}">${t}</span>${rec}
  <svg class="ml-[13px] size-2 shrink-0"><use href="#x"/></svg></div>
  ${i>=2?'<i class="absolute left-[112px] top-[13px] w-[2px] h-4 bg-[#b9c8e8]"></i>':''}</div>`}).join('');

const plazas=[['Baswant Toll Plaza',0,3,14,0,'text-[#2b2b2b]'],['Musunuru Toll Plaza',0,3,12,0,'text-[#2b2b2b]'],['Kheerwa Toll Plaza Rajasthan',0,0,6,2,'text-[#02cfae] [-webkit-text-stroke:0.4px_#02cfae]']];
document.getElementById('plazas').innerHTML=plazas.map(p=>`<div class="h-[47.200px] border-b border-[#e8e8ea]"><p class="pl-[13px] h-[28px] pt-[7px] text-[9.1px] leading-[12px] font-bold tracking-[-0.23px] ${p[5]}">${p[0]}</p>
<div class="ml-[103px] w-[954px] grid grid-cols-4 h-[18.500px] text-center text-[10px] leading-[18px]"><span class="bg-[#ffb000] text-[#3a2a00]">${p[1]}</span><span class="bg-[#fe0000] text-[#a00]">${p[2]}</span><span class="bg-[#80f900] text-[#10240a]">${p[3]}</span><span class="bg-[#008000] text-[#042c04]">${p[4]}</span></div></div>`).join('');

const cell=(v,b)=>`<span class="pl-[5px] w-[69px] ${b?'font-bold text-black':''}">${v[0]}</span><span class="pl-[5px] w-[222px]">${v[1]}</span><span class="pl-[5px] w-[125px]">${v[2]}</span><span class="pl-[5px] w-[242px]">${v[3]}</span><span class="pl-[5px] w-[126px]">${v[4]}</span><span class="pl-[5px] w-[127px]">${v[5]}</span><span class="pl-[5px]">${v[6]}</span>`;
const data=[['00:2F','14:55:16',0],['07:CD','14:55:17',0],['06:83','14:55:16',1],['07:A6','14:55:17',0],['06:77','14:55:15',0],['06:7A','14:55:19',0],['06:6B','14:40:18',1],['06:D7','14:55:19',0]];
document.getElementById('rows').innerHTML=`<div class="flex items-center h-[24.700px] pb-[2px] font-bold text-black text-[10px]">${cell(['S.N.','MAC ID','ASSET ID','LAST SYNC','PENDING','SUCCESS','TIME DIFFERENCE'])}</div>`+
data.map((d,i)=>`<div class="flex items-center h-[25.570px] border-t border-[#c9efb0] ${d[2]?'bg-[#008000] text-[#032603]':'bg-[#80f900]'}">${cell([i+1,'00:8D:F4:D0:'+d[0],'','2025-09-01 '+d[1],0,d[2],'0 Min'],1)}</div>`).join('');

const people=[['vaibhav (Unverified)','V','bg-[#d6f0f3] text-[#21696c]',1,1,'w-[143px]'],['Arghyajit Sanyal','AS','bg-[#e4dced] text-[#42346a]',1,1,'w-[118px]'],['Sanjeev kumar Pandey','SP','bg-[#c6d2ea] text-[#0c2263]',0,0,'w-[157px]'],['Chetan Sharma','CS','bg-[#fdefc6] text-[#8a7410]',0,0,'w-[114px]'],['rashmi','R','bg-[#c6d2ea] text-[#0c2263]',0,0,'w-[63px]']];
document.getElementById('people').innerHTML=people.map(p=>`<div class="w-[236px] h-[130.800px] shrink-0 ${p[4]?'p-px':''}"><div class="relative w-full h-full grid place-items-center rounded-md bg-[linear-gradient(150deg,#e8f8f2_0%,#e8f5f6_45%,#edf5f7_55%,#f8f7f5_100%)] ${p[4]?'border-3 border-[#5b4fc8]':'border border-[#cfdfdc]'}">
<div class="size-[65px] rounded-full grid place-items-center font-semibold font-['Noto_Sans',sans-serif] text-[24px] leading-none shadow-[0_1px_3px_#0003] ${p[2]}">${p[1]}</div>
<div class="absolute ${p[4]?'left-[5px] bottom-[5px]':'left-[8px] bottom-[8px]'} h-[25px] ${p[5]} rounded bg-[#8f918f] text-white text-[12px] tracking-[0.27px] whitespace-nowrap flex items-center justify-between pl-[4px] ${p[3]?'pr-[5px]':'pr-[3px]'}"><span>${p[0]}</span><svg class="${p[3]?'w-[9px]':'w-[13px]'} h-[13px]"><use href="#${p[3]?'mic':'micoff'}"/></svg></div></div></div>`).join('');
</script>
</body>
</html>
